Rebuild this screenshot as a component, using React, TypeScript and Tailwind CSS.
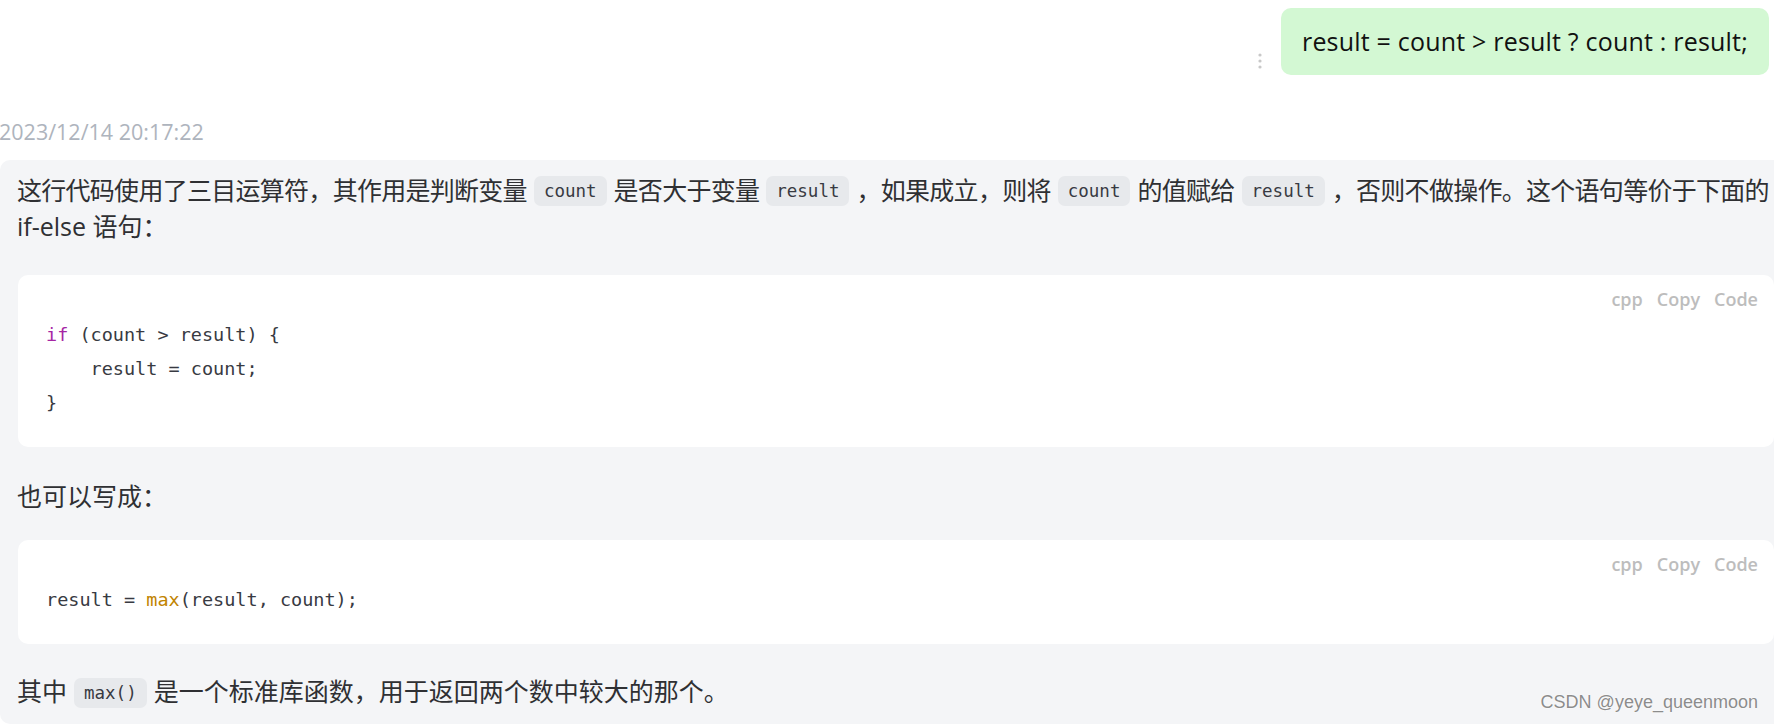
import React from 'react';

const sans = "font-['Open_Sans','Noto_Sans_CJK_SC',sans-serif]";
const mono = "font-['DejaVu_Sans_Mono','Liberation_Mono',monospace]";

function Chip({ children }: { children: React.ReactNode }) {
    return (
        <span className={`${mono} inline-block align-middle mx-[7px] px-[10px] h-[30px] leading-[30px] rounded-[7px] bg-[#e7e9ec] text-[17.5px] tracking-normal text-[#383a42] relative -top-[2px]`}>
            {children}
        </span>
    );
}

function CodeBlock({ children, className = '' }: { children: React.ReactNode; className?: string }) {
    return (
        <div className={`bg-white rounded-[10px] pt-[12px] pb-[27px] ${className}`}>
            <div className={`${sans} flex justify-end gap-[14px] pr-[16px] h-[24px] leading-[24px] text-[18px] font-semibold text-[#bdbdbd]`}>
                <span>cpp</span>
                <span>Copy</span>
                <span>Code</span>
            </div>
            <pre className={`${mono} mt-[7px] pl-[28px] text-[18.5px] leading-[34px] text-[#383a42]`}>{children}</pre>
        </div>
    );
}

export default function App() {
    return (
        <div className={`${sans} relative w-[1774px] h-[726px] overflow-hidden bg-white text-[#2f3033]`}>
            {/* user message */}
            <div className="flex justify-end items-end pt-[8px] pr-[5px]">
                <svg className="mb-[5px] mr-[18px]" width="6" height="18" viewBox="0 0 6 18">
                    <circle cx="3" cy="3" r="1.6" fill="#c8c8c8" />
                    <circle cx="3" cy="9" r="1.6" fill="#c8c8c8" />
                    <circle cx="3" cy="15" r="1.6" fill="#c8c8c8" />
                </svg>
                <div className="bg-[#d3f8d3] rounded-[10px] px-[21px] py-[16px] text-[25px] tracking-[0.2px] leading-[35px] text-[#111]">
                    result = count &gt; result ? count : result;
                </div>
            </div>

            {/* timestamp */}
            <div className="mt-[43px] h-[28px] leading-[28px] text-[21.5px] text-[#aeb4bd] -ml-[1px]">2023/12/14 20:17:22</div>

            {/* answer */}
            <div className="mt-[14px] w-[1792px] rounded-[10px] bg-[#f4f5f7] pl-[17px] pr-[18px] pt-[12px] pb-[14px] text-[25px] leading-[36px]">
                <p>
                    <span className="block whitespace-nowrap tracking-[-0.72px]">
                        这行代码使用了三目运算符，其作用是判断变量<Chip>count</Chip>是否大于变量<Chip>result</Chip>，如果成立，则将<Chip>count</Chip>的值赋给<Chip>result</Chip>，否则不做操作。这个语句等价于下面的
                    </span>
                    <span className="block">if-else 语句：</span>
                </p>

                <CodeBlock className="mt-[31px] ml-[1px]">
                    <span className="text-[#a626a4]">if</span>
                    {' (count > result) {\n    result = count;\n}'}
                </CodeBlock>

                <p className="mt-[31px]">也可以写成：</p>

                <CodeBlock className="mt-[26px] ml-[1px]">
                    {'result = '}
                    <span className="text-[#c18401]">max</span>
                    {'(result, count);'}
                </CodeBlock>

                <p className="mt-[29px]">
                    其中<Chip>max()</Chip>是一个标准库函数，用于返回两个数中较大的那个。
                </p>
            </div>

            {/* watermark */}
            <div className="absolute right-[16px] bottom-[10px] font-['Liberation_Sans',sans-serif] text-[18px] text-[#8c8c8c] [text-shadow:0_0_2px_#fff,0_0_1px_#fff]">
                CSDN @yeye_queenmoon
            </div>
        </div>
    );
}
